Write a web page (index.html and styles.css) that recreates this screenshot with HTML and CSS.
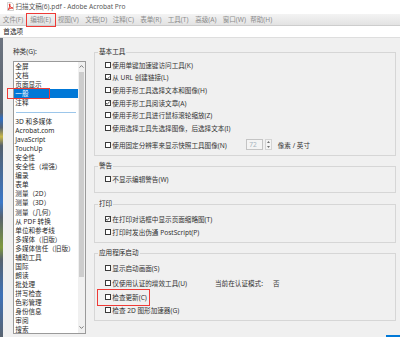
FILE: index.html
```html
<!DOCTYPE html>
<html lang="zh-CN">
<head>
    <meta charset="UTF-8">
    <meta name="viewport" content="width=device-width, initial-scale=1.0">
    <title>首选项</title>
    <link rel="stylesheet" href="styles.css">
</head>
<body>

<!-- Window title -->
<header class="titlebar">
    <svg class="app-icon" viewBox="0 0 7 9" width="7" height="9">
        <path d="M0.5 0.5 H4.6 L6.5 2.4 V8.5 H0.5 Z" fill="#fff" stroke="#b4b4b4" stroke-width="0.6"/>
        <path d="M1.4 7.6 C2.6 5.2 3.1 3.2 2.9 2.1 C2.7 1.5 2.1 1.9 2.4 3 C2.8 4.6 4.1 6 5.6 6.2 C6.3 6.3 6 5.7 5 5.8 C3.8 5.9 2.5 6.8 1.4 7.6 Z" fill="none" stroke="#e2231a" stroke-width="1"/>
    </svg>
    <span class="title-text">扫描文稿(6).pdf - Adobe Acrobat Pro</span>
</header>

<!-- Menu -->
<nav class="menubar">
    <span class="menu-item">文件(F)</span>
    <span class="menu-item marked">编辑(E)</span>
    <span class="menu-item">视图(V)</span>
    <span class="menu-item">文档(D)</span>
    <span class="menu-item">注释(C)</span>
    <span class="menu-item">表单(R)</span>
    <span class="menu-item">工具(T)</span>
    <span class="menu-item">高级(A)</span>
    <span class="menu-item">窗口(W)</span>
    <span class="menu-item">帮助(H)</span>
</nav>

<div class="dialog-title">首选项</div>

<main class="dialog">
    <div class="backdrop"></div>

    <!-- Categories -->
    <aside class="categories">
        <div class="cat-label">种类(G):</div>
        <div class="listbox">
            <ul class="cat-list">
                <li>全屏</li>
                <li>文档</li>
                <li>页面显示</li>
                <li class="selected">一般</li>
                <li>注释</li>
                <li class="sep"></li>
                <li>3D 和多媒体</li>
                <li>Acrobat.com</li>
                <li>JavaScript</li>
                <li>TouchUp</li>
                <li>安全性</li>
                <li>安全性（增强）</li>
                <li>编录</li>
                <li>表单</li>
                <li>测量（2D）</li>
                <li>测量（3D）</li>
                <li>测量（几何）</li>
                <li>从 PDF 转换</li>
                <li>单位和参考线</li>
                <li>多媒体（旧版）</li>
                <li>多媒体信任（旧版）</li>
                <li>辅助工具</li>
                <li>国际</li>
                <li>朗读</li>
                <li>批处理</li>
                <li>拼写检查</li>
                <li>色彩管理</li>
                <li>身份信息</li>
                <li>审阅</li>
                <li>搜索</li>
            </ul>
            <div class="scrollbar">
                <div class="sb-btn">
                    <svg viewBox="0 0 5 3" width="5" height="3"><polyline points="0.5,2.6 2.5,0.6 4.5,2.6" fill="none" stroke="#606060" stroke-width="0.8"/></svg>
                </div>
                <div class="sb-track"><div class="sb-thumb"></div></div>
                <div class="sb-btn">
                    <svg viewBox="0 0 5 3" width="5" height="3"><polyline points="0.5,0.4 2.5,2.4 4.5,0.4" fill="none" stroke="#606060" stroke-width="0.8"/></svg>
                </div>
            </div>
        </div>
        <span class="mark mark-list"></span>
    </aside>

    <!-- Settings -->
    <section class="settings">
        <div class="group group-basic">
            <div class="group-title">基本工具</div>
            <div class="row"><span class="cb"></span>使用单键加速键访问工具(K)</div>
            <div class="row"><span class="cb"><svg viewBox="0 0 6 6" width="6" height="6"><polyline points="1,3 2.4,4.4 5,1.4" fill="none" stroke="#333" stroke-width="0.9"/></svg></span>从 URL 创建链接(L)</div>
            <div class="row"><span class="cb"></span>使用手形工具选择文本和图像(H)</div>
            <div class="row"><span class="cb"><svg viewBox="0 0 6 6" width="6" height="6"><polyline points="1,3 2.4,4.4 5,1.4" fill="none" stroke="#333" stroke-width="0.9"/></svg></span>使用手形工具阅读文章(A)</div>
            <div class="row"><span class="cb"></span>使用手形工具进行鼠标滚轮缩放(Z)</div>
            <div class="row"><span class="cb"></span>使用选择工具先选择图像，后选择文本(I)</div>
            <div class="row row-spin">
                <span class="cb"></span>使用固定分辨率来显示快照工具图像(N)
                <span class="spin-box">72</span>
                <span class="spin-btns">
                    <svg viewBox="0 0 3 2" width="3" height="2"><polygon points="0,2 1.5,0 3,2" fill="#707070"/></svg>
                    <svg viewBox="0 0 3 2" width="3" height="2"><polygon points="0,0 1.5,2 3,0" fill="#707070"/></svg>
                </span>
                <span class="unit">像素 / 英寸</span>
            </div>
        </div>

        <div class="group group-warn">
            <div class="group-title">警告</div>
            <div class="row"><span class="cb"></span>不显示编辑警告(W)</div>
        </div>

        <div class="group group-print">
            <div class="group-title">打印</div>
            <div class="row"><span class="cb"><svg viewBox="0 0 6 6" width="6" height="6"><polyline points="1,3 2.4,4.4 5,1.4" fill="none" stroke="#333" stroke-width="0.9"/></svg></span>在打印对话框中显示页面缩略图(T)</div>
            <div class="row"><span class="cb"></span>打印时发出伪通 PostScript(P)</div>
        </div>

        <div class="group group-start">
            <div class="group-title">应用程序启动</div>
            <div class="row row-tall"><span class="cb"></span>显示启动画面(S)</div>
            <div class="row row-tall"><span class="cb"></span>仅使用认证的增效工具(U)
                <span class="cert-label">当前在认证模式:</span>
                <span class="cert-value">否</span>
            </div>
            <div class="row"><span class="check marked"><span class="cb"></span>检查更新(C)</span></div>
            <div class="row"><span class="cb"></span>检查 2D 图形加速器(G)</div>
        </div>

        <div class="buttons"><span class="btn-ok"></span></div>
    </section>
</main>

</body>
</html>
```

FILE: styles.css
```css
/* Global */
* {
    box-sizing: border-box;
}

html, body {
    margin: 0;
    padding: 0;
}

body {
    width: 400px;
    height: 337px;
    overflow: hidden;
    font-family: "Noto Sans", "Noto Sans CJK SC", sans-serif;
    font-size: 6.6px;
    color: #333;
    background-color: #f0f0f0;
}

/* Title bar */
.titlebar {
    height: 13.5px;
    background-color: #fff;
    display: flex;
    align-items: center;
    gap: 2px;
    padding-left: 6.5px;
}

.app-icon {
    display: block;
}

.title-text {
    color: #5a5a5a;
    line-height: 10px;
}

/* Menu bar */
.menubar {
    height: 12.5px;
    display: flex;
    align-items: stretch;
    padding-left: 2.7px;
    background: linear-gradient(#f3f3f3, #e3e3e3);
    border-bottom: 1px solid #cdcdcd;
}

.menu-item {
    position: relative;
    flex: 0 0 27.5px;
    line-height: 11.5px;
    color: #8c8c8c;
}

.menu-item.marked::after {
    content: "";
    position: absolute;
    left: -4.5px;
    width: 28.5px;
    top: -0.3px;
    bottom: -2.2px;
    border: 1.3px solid #ee3a36;
}

/* Dialog */
.dialog-title {
    height: 12px;
    line-height: 11px;
    padding-left: 3.3px;
    background-color: #fff;
    border-bottom: 1px solid #dedede;
    color: #222;
}

.dialog {
    height: 299px;
    display: flex;
}

.backdrop {
    flex: 0 0 3px;
    background: linear-gradient(#6c7480 0%, #5a6470 25%, #2f6fc4 27%, #5a6470 30%, #c9b84a 33%, #55606c 36%, #3b78c8 55%, #58636e 60%, #7f9a3e 70%, #58636e 74%, #3e72b8 86%, #5a6470 100%);
}

/* Categories list */
.categories {
    position: relative;
    flex: 0 0 91px;
    padding: 9.2px 0 0 10px;
}

.cat-label {
    line-height: 9px;
    margin-bottom: 4.8px;
}

.listbox {
    width: 73px;
    height: 273px;
    display: flex;
    background-color: #fff;
    border: 1px solid #9a9a9a;
}

.cat-list {
    flex: 1;
    list-style: none;
    margin: 0;
    padding: 0;
    overflow: hidden;
}

.cat-list li {
    height: 9.07px;
    line-height: 9.07px;
    padding-left: 1.3px;
    white-space: nowrap;
    color: #2a2a2a;
}

.cat-list li.selected {
    background-color: #0078d7;
    color: #fff;
}

.cat-list li.sep {
    height: 9.6px;
    display: flex;
    align-items: center;
    padding: 0 2px;
}

.cat-list li.sep::before {
    content: "";
    flex: 1;
    height: 1px;
    background-color: #9cc6ea;
}

.scrollbar {
    flex: 0 0 7px;
    display: flex;
    flex-direction: column;
    background-color: #f0f0f0;
}

.sb-btn {
    height: 10px;
    display: flex;
    align-items: center;
    justify-content: center;
}

.sb-track {
    flex: 1;
    padding: 0 1px;
}

.sb-thumb {
    height: 205px;
    background-color: #cdcdcd;
}

.mark {
    position: absolute;
    border: 1.3px solid #ee3a36;
}

.mark-list {
    left: 4px;
    top: 49.7px;
    width: 43px;
    height: 11.6px;
}

/* Settings groups */
.settings {
    flex: 1;
    padding: 13.5px 4px 0 0;
    display: flex;
    flex-direction: column;
}

.group {
    border: 1px solid #d6d6d6;
    padding: 0 0 4px;
    margin-bottom: 10.5px;
}

.group-title {
    display: table;
    margin: -6px 0 3px 3px;
    padding: 0 1px;
    line-height: 9px;
    background-color: #f0f0f0;
    color: #2a2a2a;
}

.row {
    height: 12.6px;
    display: flex;
    align-items: center;
    padding-left: 10px;
    white-space: nowrap;
    color: #333;
}

.row-tall {
    height: 15.2px;
}

.cb {
    flex: 0 0 6px;
    width: 6px;
    height: 6px;
    margin-right: 1.3px;
    border: 0.8px solid #3a3a3a;
    background-color: #fff;
    display: flex;
}

.cb svg {
    display: block;
    margin: -0.8px;
}

.check {
    position: relative;
    display: flex;
    align-items: center;
}

.check.marked::after {
    content: "";
    position: absolute;
    left: -8px;
    right: -3.5px;
    top: -3.5px;
    bottom: -3.7px;
    border: 1.3px solid #ee3a36;
}

.row-spin {
    height: 12px;
    margin-top: 4.5px;
}

.spin-box {
    width: 17px;
    height: 11px;
    margin-left: 19px;
    padding-left: 2.5px;
    line-height: 10px;
    color: #a8b4c0;
    background-color: #f4f4f4;
    border: 1px solid #c4c4c4;
}

.spin-btns {
    width: 7px;
    height: 11px;
    margin-left: 2px;
    display: flex;
    flex-direction: column;
    align-items: center;
    justify-content: space-around;
    border: 1px solid #d4d4d4;
    background-color: #f4f4f4;
}

.spin-btns svg {
    display: block;
}

.unit {
    margin-left: 6px;
}

.cert-label {
    margin-left: 28px;
}

.cert-value {
    margin-left: 10px;
}

.group-warn {
    padding-bottom: 6.5px;
}

.group-print .group-title {
    margin-bottom: 5px;
}

/* Bottom buttons */
.buttons {
    display: flex;
    justify-content: flex-end;
    margin-top: auto;
    margin-right: -4px;
}

.btn-ok {
    width: 14px;
    height: 2px;
    background-color: #0078d7;
}
```
